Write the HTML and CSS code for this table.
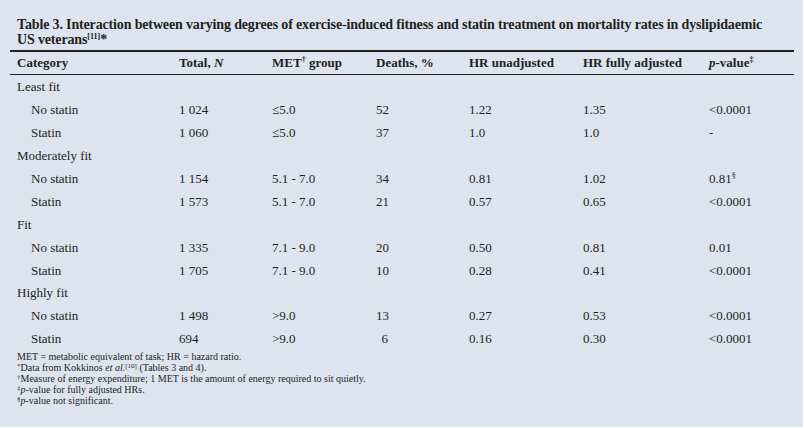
FILE: index.html
```html
<!DOCTYPE html>
<html>
<head>
<meta charset="utf-8">
<link rel="stylesheet" href="styles.css">
</head>
<body>
<div class="panel">
  <h1 class="title">Table 3. Interaction between varying degrees of exercise-induced fitness and statin treatment on mortality rates in dyslipidaemic<br>US veterans<sup class="tsup">[11]</sup>*</h1>
  <table class="data">
    <colgroup>
      <col class="c1"><col class="c2"><col class="c3"><col class="c4"><col class="c5"><col class="c6"><col class="c7">
    </colgroup>
    <thead>
      <tr>
        <th>Category</th>
        <th>Total, <i>N</i></th>
        <th>MET<sup class="hsup">†</sup> group</th>
        <th>Deaths, %</th>
        <th>HR unadjusted</th>
        <th>HR fully adjusted</th>
        <th><i>p</i>-value<sup class="hsup">‡</sup></th>
      </tr>
    </thead>
    <tbody>
      <tr class="grp"><td colspan="7">Least fit</td></tr>
      <tr><td class="sub">No statin</td><td>1 024</td><td>≤5.0</td><td class="num">52</td><td>1.22</td><td>1.35</td><td>&lt;0.0001</td></tr>
      <tr><td class="sub">Statin</td><td>1 060</td><td>≤5.0</td><td class="num">37</td><td>1.0</td><td>1.0</td><td>-</td></tr>
      <tr class="grp"><td colspan="7">Moderately fit</td></tr>
      <tr><td class="sub">No statin</td><td>1 154</td><td>5.1 - 7.0</td><td class="num">34</td><td>0.81</td><td>1.02</td><td>0.81<sup class="vsup">§</sup></td></tr>
      <tr><td class="sub">Statin</td><td>1 573</td><td>5.1 - 7.0</td><td class="num">21</td><td>0.57</td><td>0.65</td><td>&lt;0.0001</td></tr>
      <tr class="grp"><td colspan="7">Fit</td></tr>
      <tr><td class="sub">No statin</td><td>1 335</td><td>7.1 - 9.0</td><td class="num">20</td><td>0.50</td><td>0.81</td><td>0.01</td></tr>
      <tr><td class="sub">Statin</td><td>1 705</td><td>7.1 - 9.0</td><td class="num">10</td><td>0.28</td><td>0.41</td><td>&lt;0.0001</td></tr>
      <tr class="grp"><td colspan="7">Highly fit</td></tr>
      <tr><td class="sub">No statin</td><td>1 498</td><td>&gt;9.0</td><td class="num">13</td><td>0.27</td><td>0.53</td><td>&lt;0.0001</td></tr>
      <tr><td class="sub">Statin</td><td>694</td><td>&gt;9.0</td><td class="num">6</td><td>0.16</td><td>0.30</td><td>&lt;0.0001</td></tr>
    </tbody>
  </table>
  <div class="notes">
    <p>MET = metabolic equivalent of task; HR = hazard ratio.</p>
    <p><sup class="nsup">*</sup>Data from Kokkinos <i>et al.</i><sup class="nsup">[10]</sup> (Tables 3 and 4).</p>
    <p><sup class="nsup">†</sup>Measure of energy expenditure; 1 MET is the amount of energy required to sit quietly.</p>
    <p><sup class="nsup">‡</sup><i>p</i>-value for fully adjusted HRs.</p>
    <p><sup class="nsup">§</sup><i>p</i>-value not significant.</p>
  </div>
</div>
</body>
</html>
```

FILE: styles.css
```css
html, body {
  margin: 0;
  padding: 0;
  background: #ffffff;
}
.panel {
  width: 803px;
  height: 427px;
  background: #dee3f0;
  box-sizing: border-box;
  padding: 17px 10px 0 10px;
  font-family: "Liberation Serif", "Times New Roman", serif;
  color: #231f20;
  overflow: hidden;
}
.title {
  margin: 0 0 3px 7px;
  font-size: 14px;
  letter-spacing: -0.15px;
  line-height: 15px;
  font-weight: bold;
  white-space: nowrap;
}
.tsup {
  font-size: 8px;
  vertical-align: 5px;
  line-height: 0;
  letter-spacing: 0;
}
.data {
  width: 784px;
  border-collapse: collapse;
  table-layout: fixed;
  font-size: 13px;
}
.c1 { width: 162px; }
.c2 { width: 93px; }
.c3 { width: 104px; }
.c4 { width: 93px; }
.c5 { width: 114px; }
.c6 { width: 126px; }
.c7 { width: 92px; }
.data thead tr {
  border-top: 2px solid #231f20;
  border-bottom: 1px solid #231f20;
}
.data th {
  text-align: left;
  font-weight: bold;
  height: 22px;
  padding: 0 0 0 7px;
  white-space: nowrap;
}
.data td {
  height: 22.9px;
  padding: 0 0 0 7px;
  white-space: nowrap;
}
.data tbody tr:first-child td {
  padding-top: 1px;
}
.data td.sub {
  padding-left: 21px;
}
.data td.num {
  text-align: right;
  padding-right: 74px;
}
.hsup, .vsup {
  font-size: 8px;
  vertical-align: 5px;
  line-height: 0;
}
.notes {
  margin: 0 0 0 7px;
  font-size: 10px;
  line-height: 11.1px;
}
.notes p {
  margin: 0;
}
.nsup {
  font-size: 7px;
  vertical-align: 3px;
  line-height: 0;
}
```
